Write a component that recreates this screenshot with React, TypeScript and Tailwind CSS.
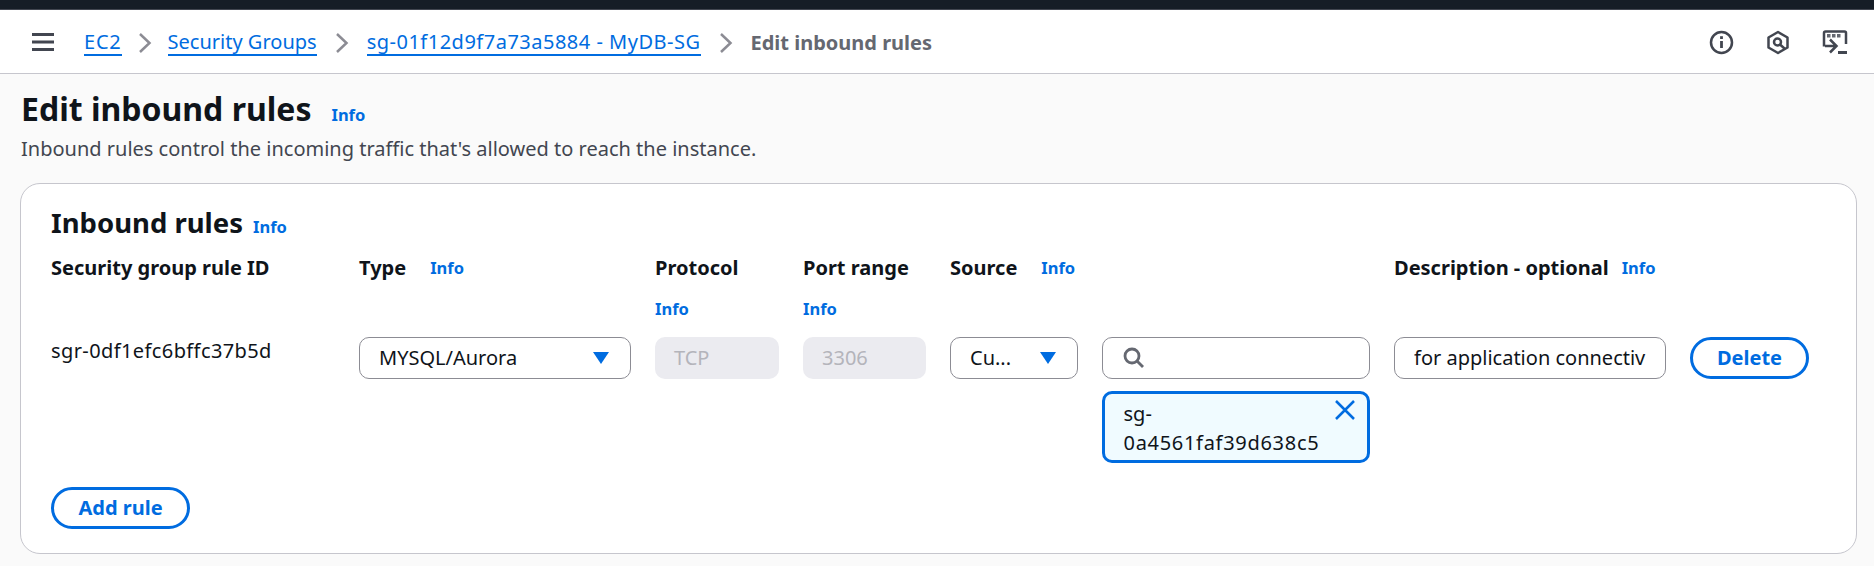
const font = { fontFamily: '"Noto Sans", sans-serif' };

function Info({ className = "" }: { className?: string }) {
  return <span className={`text-[16.5px] leading-[22px] font-bold text-[#006ce0] ${className}`}>Info</span>;
}

function Chevron() {
  return (
    <svg width="20" height="24" viewBox="0 0 20 24" fill="none" className="shrink-0">
      <path d="M5 3l9.500 9-9.500 9" stroke="#8c8c94" strokeWidth="2.500" />
    </svg>
  );
}

function Crumb({ children, className = "" }: { children: React.ReactNode; className?: string }) {
  return (
    <span className={`text-[20px] leading-[24px] text-[#006ce0] border-b-2 border-[#006ce0] ${className}`}>{children}</span>
  );
}

function Caret() {
  return (
    <svg width="18" height="14" viewBox="0 0 18 14" className="shrink-0">
      <path d="M1 1h16L9 13z" fill="#006ce0" />
    </svg>
  );
}

function HeaderLabel({ children }: { children: React.ReactNode }) {
  return <span className="text-[20px] leading-[28px] font-bold text-[#0f141a]">{children}</span>;
}

const field = "h-[42px] rounded-[10px] border border-[#8c8c94] bg-white flex items-center text-[20px] text-[#0f141a]";

export default function App() {
  return (
    <div style={font} className="h-[566px] w-[1874px] overflow-hidden bg-[#fafafa] flex flex-col">
      <div className="h-[10px] shrink-0 bg-[#161d26] border-b border-[#424650]" />
      <header className="h-[64px] shrink-0 bg-white border-b border-[#c6c6cd] flex items-center pl-[31px] pr-[26px]">
        <svg width="24" height="20" viewBox="0 0 24 20" className="shrink-0">
          <path d="M1 2.500h22M1 10h22M1 17.500h22" stroke="#424650" strokeWidth="3" />
        </svg>
        <nav className="ml-[29px] mt-[2px] flex items-center">
          <Crumb className="tracking-[0.8px]">EC2</Crumb>
          <span className="mx-[13px]"><Chevron /></span>
          <Crumb>Security Groups</Crumb>
          <span className="mx-[15px]"><Chevron /></span>
          <Crumb className="tracking-[0.5px]">sg-01f12d9f7a73a5884 - MyDB-SG</Crumb>
          <span className="mx-[15px]"><Chevron /></span>
          <span className="text-[20px] leading-[24px] font-bold text-[#656871]">Edit inbound rules</span>
        </nav>
        <div className="ml-auto mt-[2px] flex items-center gap-[32px]">
          <svg width="25" height="25" viewBox="0 0 25 25" fill="none">
            <circle cx="12.500" cy="12.500" r="10.500" stroke="#424650" strokeWidth="2.500" />
            <path d="M12.500 11v7" stroke="#424650" strokeWidth="2.800" />
            <path d="M12.500 6.200v2.800" stroke="#424650" strokeWidth="2.800" />
          </svg>
          <svg width="24" height="25" viewBox="0 0 24 25" fill="none">
            <path d="M12 2l9.500 5.500v10L12 23l-9.500-5.500v-10z" stroke="#424650" strokeWidth="2.500" strokeLinejoin="round" />
            <circle cx="11.500" cy="12" r="3.500" stroke="#424650" strokeWidth="2.500" />
            <path d="M14 14.500l4.500 4" stroke="#424650" strokeWidth="2.500" />
          </svg>
          <svg width="26" height="25" viewBox="0 0 26 25" fill="none">
            <path d="M2 16.500V3a1.500 1.500 0 0 1 1.500-1.500h19A1.500 1.500 0 0 1 24 3v11" stroke="#424650" strokeWidth="2.500" />
            <path d="M5 4h3.500v3.500H5zM10 4h3.500v3.500H10zM15 4h3.500v3.500H15z" fill="#656871" />
            <path d="M3 16h11M8 9.500l6.500 6.500L8 22.500" stroke="#424650" strokeWidth="2.500" />
            <path d="M16 22.500h9" stroke="#424650" strokeWidth="3" />
          </svg>
        </div>
      </header>

      <main className="flex-1 px-[20px]">
        <div className="mt-[14px] ml-[1px] flex items-baseline">
          <h1 className="text-[32px] leading-[42px] font-bold text-[#0f141a]">Edit inbound rules</h1>
          <Info className="ml-[20px]" />
        </div>
        <p className="ml-[1px] mt-[5px] text-[20px] leading-[28px] text-[#424650]">
          Inbound rules control the incoming traffic that's allowed to reach the instance.
        </p>

        <section className="mt-[20px] h-[371px] w-[1837px] rounded-[20px] border border-[#c6c6cd] bg-white pl-[30px] pt-[20px]">
          <div className="flex items-baseline">
            <h2 className="text-[27.500px] leading-[38px] font-bold text-[#0f141a]">Inbound rules</h2>
            <Info className="ml-[10px]" />
          </div>
          <div className="mt-[12px] grid grid-cols-[284px_272px_124px_123px_128px_268px_272px_119px] grid-rows-[83px_auto] gap-x-[24px]">
            <HeaderLabel>Security group rule ID</HeaderLabel>
            <div className="flex items-start gap-[24px]"><HeaderLabel>Type</HeaderLabel><Info className="mt-[3px]" /></div>
            <div className="flex flex-col gap-[16px]"><HeaderLabel>Protocol</HeaderLabel><Info /></div>
            <div className="flex flex-col gap-[16px]"><HeaderLabel>Port range</HeaderLabel><Info /></div>
            <div className="col-span-2 flex items-start gap-[24px]"><HeaderLabel>Source</HeaderLabel><Info className="mt-[3px]" /></div>
            <div className="col-span-2 flex items-start gap-[13px] whitespace-nowrap"><HeaderLabel>Description - optional</HeaderLabel><Info className="mt-[3px]" /></div>

            <span className="text-[20px] leading-[28px] tracking-[0.4px] text-[#0f141a]">sgr-0df1efc6bffc37b5d</span>
            <div className={`${field} px-[19px] justify-between`}>MYSQL/Aurora<span className="mr-[1px]"><Caret /></span></div>
            <div className="h-[42px] rounded-[10px] bg-[#ebebf0] flex items-center px-[19px] text-[20px] text-[#b4b4bb]">TCP</div>
            <div className="h-[42px] rounded-[10px] bg-[#ebebf0] flex items-center px-[19px] text-[20px] text-[#b4b4bb]">3306</div>
            <div className={`${field} px-[19px] justify-between`}>Cu...<span className="mr-[1px]"><Caret /></span></div>
            <div className="flex flex-col gap-[12px]">
              <div className={`${field} px-[19px]`}>
                <svg width="24" height="24" viewBox="0 0 24 24" fill="none">
                  <circle cx="10" cy="10" r="7" stroke="#656871" strokeWidth="2.800" />
                  <path d="M15 15l6 6" stroke="#656871" strokeWidth="2.800" />
                </svg>
              </div>
              <div className="relative h-[72px] rounded-[10px] border-[3px] border-[#006ce0] bg-[#f0fbff] pl-[18.500px] pt-[4.500px] text-[20px] leading-[29px] text-[#0f141a]">
                <div>sg-</div>
                <div className="tracking-[0.7px]">0a4561faf39d638c5</div>
                <svg width="22" height="22" viewBox="0 0 22 22" fill="none" className="absolute right-[11px] top-[5px]">
                  <path d="M2 2l18 18M20 2L2 20" stroke="#006ce0" strokeWidth="2.500" />
                </svg>
              </div>
            </div>
            <div className={`${field} px-[19px]`}>
              <span className="block w-full overflow-hidden whitespace-nowrap">for application connectivity</span>
            </div>
            <button className="h-[42px] rounded-full border-[3px] border-[#006ce0] bg-white text-[20px] font-bold text-[#006ce0]">Delete</button>
          </div>
          <button className="mt-[24px] h-[42px] w-[139px] rounded-full border-[3px] border-[#006ce0] bg-white text-[20px] font-bold text-[#006ce0]">Add rule</button>
        </section>
      </main>
    </div>
  );
}
